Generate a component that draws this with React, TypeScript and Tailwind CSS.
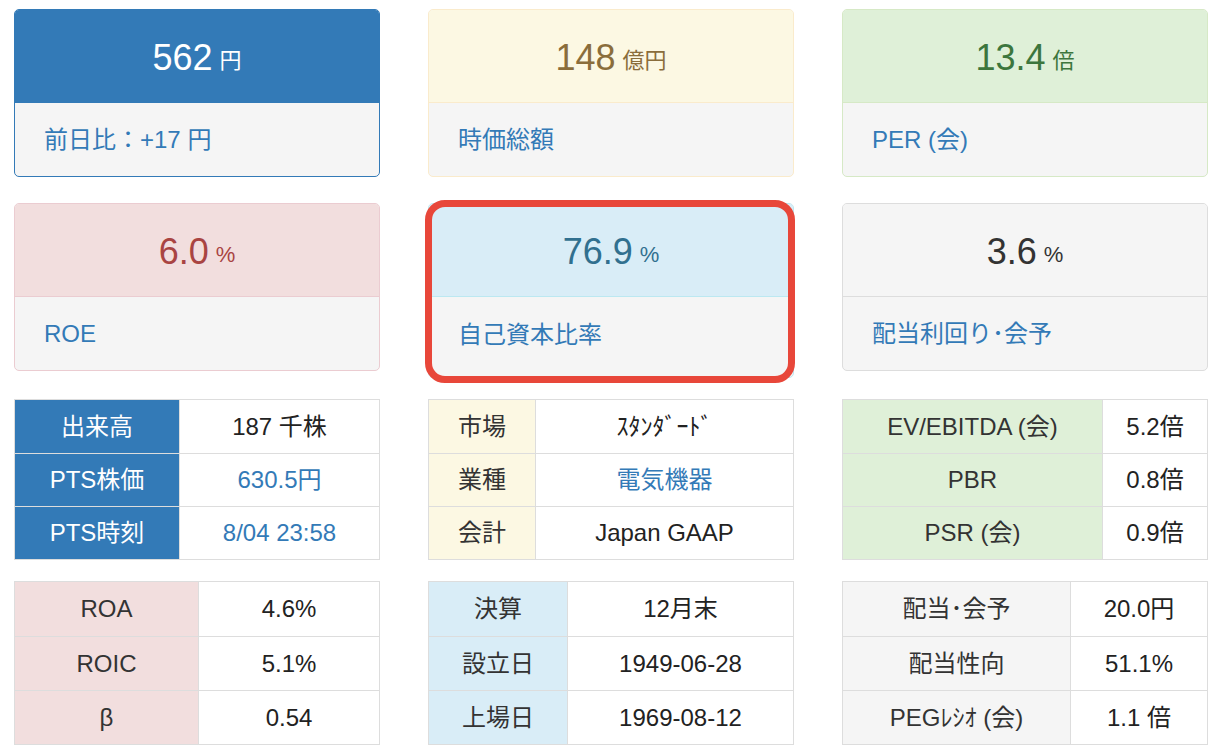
import type { ReactNode } from "react";

const font = { fontFamily: '"Liberation Sans", "Noto Sans CJK JP", sans-serif' };

type Tone = "primary" | "warning" | "success" | "danger" | "info" | "default";

const tones: Record<Tone, { border: string; head: string; text: string }> = {
  primary: { border: "border-[#337ab7]", head: "bg-[#337ab7] border-[#337ab7]", text: "text-white" },
  warning: { border: "border-[#faebcc]", head: "bg-[#fcf8e3] border-[#faebcc]", text: "text-[#8a6d3b]" },
  success: { border: "border-[#d6e9c6]", head: "bg-[#dff0d8] border-[#d6e9c6]", text: "text-[#3c763d]" },
  danger: { border: "border-[#ebccd1]", head: "bg-[#f2dede] border-[#ebccd1]", text: "text-[#a94442]" },
  info: { border: "border-[#bce8f1]", head: "bg-[#d9edf7] border-[#bce8f1]", text: "text-[#31708f]" },
  default: { border: "border-[#dddddd]", head: "bg-[#f5f5f5] border-[#dddddd]", text: "text-[#333333]" },
};

function StatCard({
  tone,
  value,
  unit,
  label,
  tall,
}: {
  tone: Tone;
  value: string;
  unit: string;
  label: ReactNode;
  tall?: boolean;
}) {
  const t = tones[tone];
  return (
    <div className={`border ${t.border} rounded-[5px] overflow-hidden bg-[#f5f5f5]`}>
      <div className={`h-[93px] border-b ${t.head} ${t.text} flex items-center justify-center pt-[3px]`}>
        <span className="text-[36px] leading-none">{value}</span>
        <span className="text-[22px] leading-none ml-[7px] mt-[6px]">{unit}</span>
      </div>
      <div className={`${tall ? "h-[80px] pb-[5px]" : "h-[73px]"} flex items-center px-[29px] pt-[1px] text-[24px] text-[#337ab7]`}>
        {label}
      </div>
    </div>
  );
}

type Row = { k: string; v: string; link?: boolean };

function InfoTable({
  rows,
  labelW,
  labelCls,
  labelText = "text-[#333333]",
  labelLine = "border-[#dddddd]",
  rowH,
}: {
  rows: Row[];
  labelW: string;
  labelCls: string;
  labelText?: string;
  labelLine?: string;
  rowH: string;
}) {
  return (
    <div className="border border-[#dddddd] bg-white">
      {rows.map((r, i) => (
        <div key={r.k} className={`flex ${rowH} ${i > 0 ? "border-t border-[#dddddd]" : ""}`}>
          <div
            className={`${labelW} shrink-0 ${labelCls} ${labelText} ${i > 0 ? `border-t ${labelLine} -mt-px` : ""} border-r border-[#dddddd] flex items-center justify-center text-[24px]`}
          >
            {r.k}
          </div>
          <div
            className={`flex-1 flex items-center justify-center text-[24px] ${r.link ? "text-[#337ab7]" : "text-[#222222]"}`}
          >
            {r.v}
          </div>
        </div>
      ))}
    </div>
  );
}

export default function App() {
  return (
    <div className="w-[1218px] h-[751px] overflow-hidden bg-white pl-[14px] pr-[10px] pt-[9px]" style={font}>
      {/* top cards */}
      <div className="grid grid-cols-3 gap-x-[48px] items-start">
        <StatCard tone="primary" value="562" unit="円" label="前日比：+17 円" />
        <StatCard tone="warning" value="148" unit="億円" label="時価総額" />
        <StatCard tone="success" value="13.4" unit="倍" label="PER (会)" />
      </div>

      <div className="grid grid-cols-3 gap-x-[48px] items-start mt-[26px]">
        <StatCard tone="danger" value="6.0" unit="%" label="ROE" />
        <div className="relative h-[168px]">
          <StatCard tone="info" value="76.9" unit="%" label="自己資本比率" tall />
          <div className="absolute top-[-3px] left-[-3px] right-[-1px] bottom-[-12px] border-[7px] border-[#e8473a] rounded-[20px] pointer-events-none" />
        </div>
        <StatCard tone="default" value="3.6" unit="%" label="配当利回り･会予" />
      </div>

      {/* tables */}
      <div className="grid grid-cols-3 gap-x-[48px] items-start mt-[28px]">
        <InfoTable
          rowH="h-[53px]"
          labelW="w-[165px]"
          labelCls="bg-[#337ab7]"
          labelText="text-white"
          labelLine="border-[#9cc3e6]"
          rows={[
            { k: "出来高", v: "187 千株" },
            { k: "PTS株価", v: "630.5円", link: true },
            { k: "PTS時刻", v: "8/04 23:58", link: true },
          ]}
        />
        <InfoTable
          rowH="h-[53px]"
          labelW="w-[107px]"
          labelCls="bg-[#fcf8e3]"
          rows={[
            { k: "市場", v: "ｽﾀﾝﾀﾞｰﾄﾞ" },
            { k: "業種", v: "電気機器", link: true },
            { k: "会計", v: "Japan GAAP" },
          ]}
        />
        <InfoTable
          rowH="h-[53px]"
          labelW="w-[260px]"
          labelCls="bg-[#dff0d8]"
          rows={[
            { k: "EV/EBITDA (会)", v: "5.2倍" },
            { k: "PBR", v: "0.8倍" },
            { k: "PSR (会)", v: "0.9倍" },
          ]}
        />
      </div>

      <div className="grid grid-cols-3 gap-x-[48px] items-start mt-[21px]">
        <InfoTable
          rowH="h-[54px]"
          labelW="w-[184px]"
          labelCls="bg-[#f2dede]"
          rows={[
            { k: "ROA", v: "4.6%" },
            { k: "ROIC", v: "5.1%" },
            { k: "β", v: "0.54" },
          ]}
        />
        <InfoTable
          rowH="h-[54px]"
          labelW="w-[139px]"
          labelCls="bg-[#d9edf7]"
          rows={[
            { k: "決算", v: "12月末" },
            { k: "設立日", v: "1949-06-28" },
            { k: "上場日", v: "1969-08-12" },
          ]}
        />
        <InfoTable
          rowH="h-[54px]"
          labelW="w-[228px]"
          labelCls="bg-[#f5f5f5]"
          rows={[
            { k: "配当･会予", v: "20.0円" },
            { k: "配当性向", v: "51.1%" },
            { k: "PEGﾚｼｵ (会)", v: "1.1 倍" },
          ]}
        />
      </div>
    </div>
  );
}
